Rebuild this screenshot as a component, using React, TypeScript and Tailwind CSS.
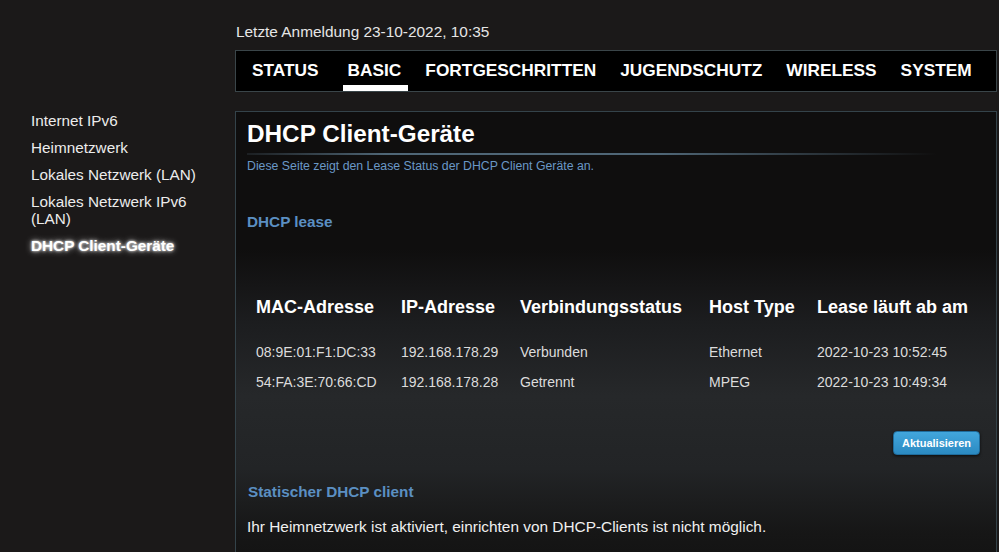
import React from 'react';

const tabs = ['STATUS', 'BASIC', 'FORTGESCHRITTEN', 'JUGENDSCHUTZ', 'WIRELESS', 'SYSTEM'];

const sideItems = [
  'Internet IPv6',
  'Heimnetzwerk',
  'Lokales Netzwerk (LAN)',
  'Lokales Netzwerk IPv6 (LAN)',
];

const leases = [
  { mac: '08:9E:01:F1:DC:33', ip: '192.168.178.29', status: 'Verbunden', type: 'Ethernet', expires: '2022-10-23 10:52:45' },
  { mac: '54:FA:3E:70:66:CD', ip: '192.168.178.28', status: 'Getrennt', type: 'MPEG', expires: '2022-10-23 10:49:34' },
];

export default function App() {
  return (
    <div className="w-[999px] h-[552px] overflow-hidden bg-[#1b1919] font-['Liberation_Sans',Arial,sans-serif] text-[#ececec]">
      <div className="pl-[236px] pt-[23px] text-[15.4px] leading-[18px] text-[#e6e6e6]">
        Letzte Anmeldung 23-10-2022, 10:35
      </div>

      {/* top navigation */}
      <div className="ml-[235px] mt-[9px] w-[762px] h-[42px] bg-black border border-[#3a4549] flex items-stretch pl-[11px] gap-[12px]">
        {tabs.map((t) => (
          <div
            key={t}
            className={
              t === 'BASIC'
                ? 'ml-[5px] flex items-center pl-[5px] pr-[7px] pt-[6px] border-b-[6px] border-white text-[17.3px] font-bold text-white'
                : 'flex items-center pl-[5px] pr-[7px] pt-[6px] border-b-[6px] border-transparent text-[17.3px] font-bold text-white'
            }
          >
            {t}
          </div>
        ))}
      </div>

      <div className="flex mt-[19px]">
        {/* sidebar */}
        <div className="w-[235px] shrink-0 pl-[31px] pr-[30px] pt-[1px] flex flex-col gap-[10px] text-[15.3px] leading-[17px] text-[#ececec]">
          {sideItems.map((s) => (
            <div key={s}>{s}</div>
          ))}
          <div className="font-bold text-white [text-shadow:0_0_3px_#fff,0_0_6px_rgba(255,255,255,0.8)]">
            DHCP Client-Geräte
          </div>
        </div>

        {/* main panel */}
        <div className="w-[762px] h-[460px] border border-[#34434a] bg-[linear-gradient(180deg,#0f0e0e_0%,#0f0e0e_30%,#1c1d1f_46%,#26282a_62%,#222426_78%,#161616_92%,#121212_100%)] pl-[11px] pr-[15px] pt-[8px]">
          <h1 className="text-[24.3px] leading-[28px] font-bold text-white">DHCP Client-Geräte</h1>
          <div className="mt-[5px] h-[2px] w-[690px] bg-[linear-gradient(90deg,rgba(80,100,115,0.2)_0%,#4f6676_20%,#4f6676_60%,rgba(80,100,115,0)_100%)]" />
          <p className="mt-[4px] text-[12.3px] leading-[14px] text-[#6a98c6]">
            Diese Seite zeigt den Lease Status der DHCP Client Geräte an.
          </p>

          <h2 className="mt-[40px] text-[15.3px] leading-[18px] font-bold text-[#5b8fc2]">DHCP lease</h2>

          <div className="mt-[65px] pl-[9px] grid grid-cols-[145px_119px_189px_108px_1fr]">
            <div className="text-[18px] leading-[22px] font-bold text-white">MAC-Adresse</div>
            <div className="text-[18px] leading-[22px] font-bold text-white">IP-Adresse</div>
            <div className="text-[18px] leading-[22px] font-bold text-white">Verbindungsstatus</div>
            <div className="text-[18px] leading-[22px] font-bold text-white">Host Type</div>
            <div className="text-[18px] leading-[22px] font-bold text-white whitespace-nowrap">Lease läuft ab am</div>
          </div>
          <div className="mt-[19px] pl-[9px]">
            {leases.map((l) => (
              <div key={l.mac} className="grid grid-cols-[145px_119px_189px_108px_1fr] h-[30px] items-center text-[14px] leading-[16px] text-[#dcdcdc]">
                <div>{l.mac}</div>
                <div>{l.ip}</div>
                <div>{l.status}</div>
                <div>{l.type}</div>
                <div>{l.expires}</div>
              </div>
            ))}
          </div>

          <div className="mt-[34px] flex justify-end pr-[1px]">
            <button className="h-[24px] w-[87px] rounded-[4px] border border-[#1f6c9c] bg-[linear-gradient(180deg,#42a6dc_0%,#2b8ac2_100%)] text-[11px] font-bold text-white shadow-[0_1px_3px_rgba(0,0,0,0.7)]">
              Aktualisieren
            </button>
          </div>

          <h2 className="mt-[28px] pl-[1px] text-[15.3px] leading-[18px] font-bold text-[#5b8fc2]">Statischer DHCP client</h2>
          <p className="mt-[17px] text-[15.4px] leading-[18px] text-[#f0f0f0]">
            Ihr Heimnetzwerk ist aktiviert, einrichten von DHCP-Clients ist nicht möglich.
          </p>
        </div>
      </div>
    </div>
  );
}
